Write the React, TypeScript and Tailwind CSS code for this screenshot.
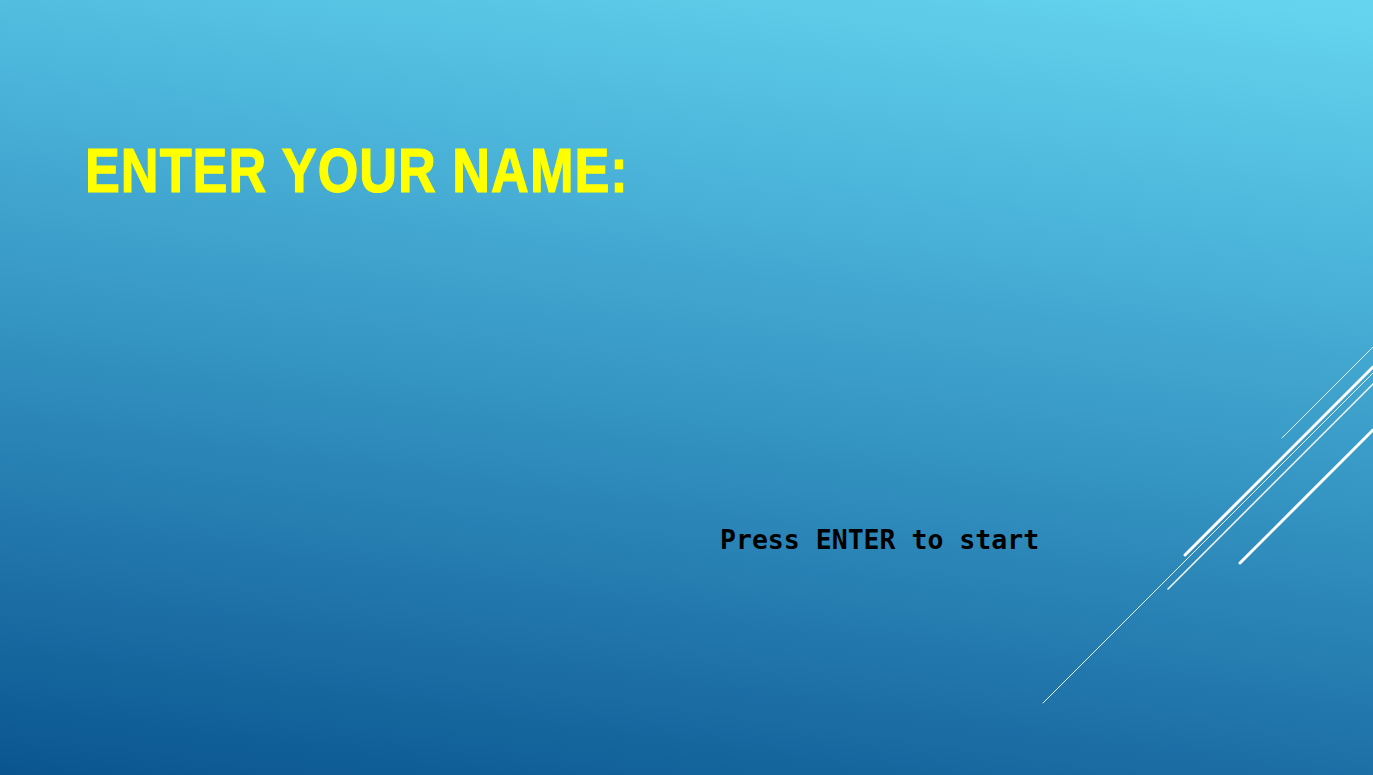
import React from 'react';

const Streaks: React.FC = () => (
  <svg className="absolute inset-0 w-full h-full pointer-events-none" viewBox="0 0 1373 775" preserveAspectRatio="none">
    <g stroke="white" strokeLinecap="round" fill="none">
      <line x1="1282" y1="438" x2="1373" y2="347" strokeWidth="1" opacity="0.85" />
      <line x1="1185" y1="555" x2="1373" y2="367" strokeWidth="3" />
      <line x1="1043" y1="703" x2="1373" y2="373" strokeWidth="1" opacity="0.9" />
      <line x1="1168" y1="589" x2="1373" y2="384" strokeWidth="1.5" opacity="0.95" />
      <line x1="1240" y1="563" x2="1373" y2="430" strokeWidth="3" />
    </g>
  </svg>
);

export default function App() {
  return (
    <div className="relative w-full h-screen overflow-hidden bg-[linear-gradient(8deg,#0a5590_0%,#1e72a8_22%,#3595c3_48%,#4db6db_74%,#66d6f0_100%)]">
      <Streaks />
      <div className="relative flex flex-col items-start">
        <h1
          className="mt-[139px] ml-[85px] text-[63px] leading-none font-bold tracking-[1.2px] text-[#ffff00] [-webkit-text-stroke:1.2px_#ffff00] origin-left scale-x-[0.83]"
          style={{ fontFamily: '"Liberation Sans", Arial, sans-serif' }}
        >
          ENTER YOUR NAME:
        </h1>
        <p
          className="mt-[325px] ml-[720px] text-[26.5px] leading-none font-bold text-black"
          style={{ fontFamily: '"DejaVu Sans Mono", "Liberation Mono", monospace' }}
        >
          Press ENTER to start
        </p>
      </div>
    </div>
  );
}
